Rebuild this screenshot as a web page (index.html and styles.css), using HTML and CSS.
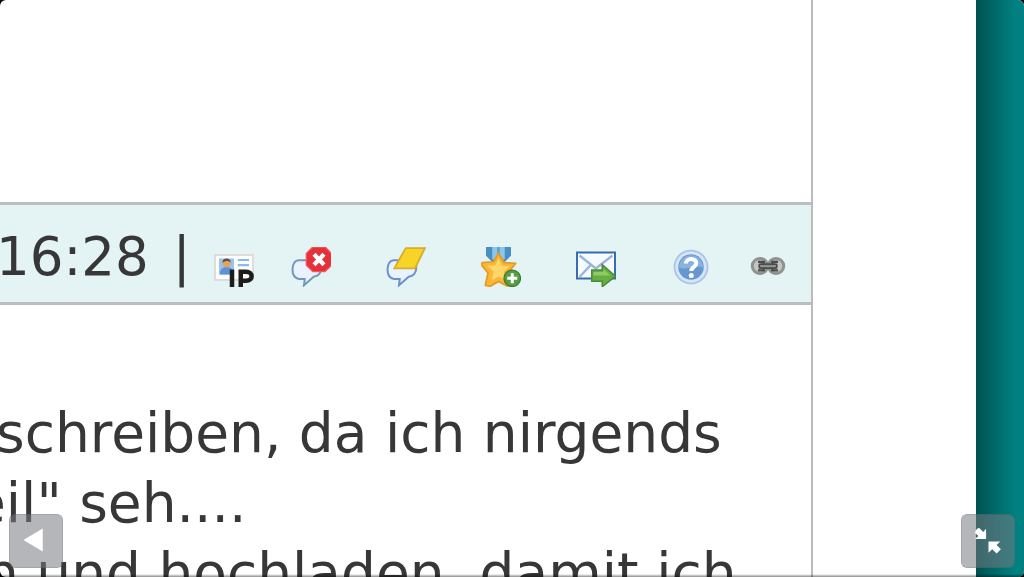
FILE: index.html
```html
<!DOCTYPE html>
<html lang="de">
<head>
  <meta charset="utf-8">
  <title>Forum</title>
  <link rel="stylesheet" href="styles.css">
</head>
<body>
  <div class="screen">
    <main class="page">
      <article class="post">
        <div class="post-end"></div>
        <header class="post-bar">
          <time class="post-time">16:28</time>
          <span class="divider">|</span>
          <a class="tool" href="#ip" aria-label="IP">
            <svg viewBox="0 0 16 16">
              <rect x=".4" y="3.200" width="15.200" height="10" fill="#fdfdfd" stroke="#ddd8d4" stroke-width=".7"/>
              <rect x="2" y="4.600" width="6" height="6.400" fill="#9cc3ee"/>
              <path d="M2.400 11c0-2.200 1-3 2.600-3s2.800.8 2.800 3z" fill="#5b93d8"/>
              <circle cx="5" cy="6.600" r="1.600" fill="#e0a55c"/>
              <path d="M3.300 6.300c0-2.300 3.400-2.300 3.500 0-1-.9-2-.9-3.500 0z" fill="#5c5048"/>
              <path d="M9.500 5.200h4.500M9.500 7.200h4.500" stroke="#8dbbe8" stroke-width=".9"/>
              <path d="M7.200 9v7M10.700 16V9.900h2.100c3 0 3 3.600 0 3.600h-2" fill="none" stroke="#1c1c1c" stroke-width="1.800"/>
            </svg>
          </a>
          <nav class="tools">
            <a class="tool" href="#delete" aria-label="Löschen">
              <svg viewBox="0 0 16 16">
                <path d="M3 5.300h6.500c2 0 2.600 1 2.600 2.700 0 2.600-1 3.400-3 3.900L5.200 15.300l.3-2.500H3.200C1.200 12.400.6 11 .6 9S1.200 5.600 3 5.300z" fill="#e9f3ff" stroke="#7398bb" stroke-width=".8"/>
                <path d="M8.700 0h5l2.500 2.600v4.800l-2.600 2.400H8.700L6.100 7.300V2.600z" fill="#e5303a" stroke="#f05b5b" stroke-width=".5"/>
                <path d="M9.200 2.900l4 4.200M13.200 2.900l-4 4.200" stroke="#fff" stroke-width="1.700"/>
              </svg>
            </a>
            <a class="tool" href="#edit" aria-label="Bearbeiten">
              <svg viewBox="0 0 16 16">
                <path d="M3 5.300h6.500c2 0 2.600 1 2.600 2.700 0 2.600-1 3.400-3 3.900L5.200 15.300l.3-2.500H3.200C1.200 12.400.6 11 .6 9S1.200 5.600 3 5.300z" fill="#e9f3ff" stroke="#6b92cb" stroke-width=".8"/>
                <path d="M7.900.4h7.700l-4 8.100H3.300z" fill="#f8d426" stroke="#d8ac2c" stroke-width=".7"/>
              </svg>
            </a>
            <a class="tool" href="#award" aria-label="Auszeichnen">
              <svg viewBox="0 0 16 16">
                <path d="M2 0h10v3.500L9.500 6h-5L2 3.500z" fill="#4a8fc4"/>
                <path d="M4.500 0h5v5h-5z" fill="#8fc5e6"/>
                <path d="M6.500 0h1v4h-1z" fill="#5b9fce"/>
                <path d="M7 2.500l2.200 3.700 4.700.3-3 3.700 1.500 5.300-2 .1L7 13.800l-3.300 1.900-2-.3 1.100-5L0 6.900l.6-.7 4.400-.3z" fill="#fbb537" stroke="#e59a25" stroke-width=".7" stroke-linejoin="round"/>
                <path d="M7 4.500l1.300 3 3.200.3-2.500 2 .7 3L7 11.900l-2.700 1.300.8-3.400-2.600-2.300 3.300-.2z" fill="#ffd768"/>
                <circle cx="12.500" cy="12.500" r="3.300" fill="#569e43" stroke="#397c30" stroke-width=".5"/>
                <path d="M12.500 10.500v4M10.500 12.500h4" stroke="#fff" stroke-width="1.200"/>
              </svg>
            </a>
            <a class="tool" href="#forward" aria-label="Weiterleiten">
              <svg viewBox="0 0 16 16">
                <rect x=".4" y="2.200" width="15.200" height="10.400" fill="#f5fbff" stroke="#376caf" stroke-width=".8"/>
                <path d="M1.400 3.400l6.500 5.200 6.700-5.200M1.400 12l4.700-5M14.600 12l-4.500-5" fill="none" stroke="#9ab3dd" stroke-width=".9"/>
                <path d="M6.300 9.200h4.200V7.100l5.300 4.600-5.300 4.200v-2.200H6.300z" fill="#66ae42" stroke="#4a8a35" stroke-width=".6"/>
                <path d="M7 10h4V8.800l2.700 2.600H7z" fill="#91c964"/>
              </svg>
            </a>
            <a class="tool" href="#help" aria-label="Hilfe">
              <svg viewBox="0 0 16 16">
                <circle cx="8" cy="8" r="6.600" fill="#d5e5fa" stroke="#a9c4e6" stroke-width=".7"/>
                <circle cx="8" cy="8" r="5.100" fill="#6797cf"/>
                <path d="M3.200 8.300c.2-6.700 9.400-6.700 9.600 0-3-1.500-6 1.200-9.600 0z" fill="#88b2df"/>
                <path d="M6 6.600c0-2.500 4.200-2.400 4.100 0 0 1.400-2 1.300-2 3" fill="none" stroke="#fff" stroke-width="1.600"/>
                <circle cx="8.100" cy="11.400" r="1" fill="#fff"/>
              </svg>
            </a>
          </nav>
          <a class="tool" href="#link" aria-label="Link">
            <svg viewBox="0 0 16 16">
              <rect x="1.700" y="4.600" width="6.200" height="6" rx="3" fill="#c4c6c3" stroke="#909290" stroke-width="1.200"/>
              <rect x="8.100" y="4.600" width="6.200" height="6" rx="3" fill="#c4c6c3" stroke="#909290" stroke-width="1.200"/>
              <path d="M4 5.900h2.300v3.400H4M12 5.900H9.700v3.400H12" fill="none" stroke="#4b4b4b" stroke-width=".9"/>
              <rect x="4.500" y="6.800" width="7" height="1.600" rx=".4" fill="#909290" stroke="#4b4b4b" stroke-width=".7"/>
            </svg>
          </a>
        </header>
        <div class="post-text">
          <p>schreiben, da ich nirgends</p>
          <p class="cut-word">eil" seh....</p>
          <p class="cut-letter">n und hochladen, damit ich</p>
        </div>
      </article>
    </main>
    <div class="backdrop"></div>
  </div>
  <button class="overlay-button back" aria-label="Zurück">
    <svg viewBox="0 0 54 54"><path d="M14 26l20-12v24z"/></svg>
  </button>
  <button class="overlay-button shrink" aria-label="Verkleinern">
    <svg viewBox="0 0 54 54">
      <path d="M25 25H13.500l3.500-3.300-4-3.400c1.500-.5.500-1.300 1.500-2.300.6-1.300 1.700-2.200 3.500-2.500l4 4.200 3-3.500z"/>
      <path d="M27.500 27.500h12.200l-3.700 3.700 4.400 4.300-4.400 4.600-4.600-4.600-3.900 3.700z"/>
    </svg>
  </button>
</body>
</html>
```
FILE: styles.css
```css
body {
  margin: 0;
  height: 100vh;
  overflow: hidden;
  background-color: #000;
  color: #373737;
  font-family: Verdana, "DejaVu Sans", sans-serif;
}
.screen {
  display: flex;
  height: 100vh;
  border-radius: 6px;
  overflow: hidden;
  background-color: #fff;
}
.page {
  flex: 1;
  min-width: 0;
  padding-right: 163px;
  overflow: hidden;
}
.post {
  border-right: 2px solid #bbb;
}
.post-end {
  height: 202px;
}
.post-bar {
  display: flex;
  align-items: flex-end;
  height: 82px;
  padding-bottom: 15px;
  border-top: 3px solid #b9bfbf;
  border-bottom: 3px solid #b9bfbf;
  background-color: #e4f3f3;
}
.post-time,
.divider {
  font-size: 53px;
  line-height: 60px;
}
.post-time {
  margin-left: -4px;
}
.divider {
  margin: 0 23px 0 24px;
}
.tools {
  display: flex;
  gap: 55px;
  margin: 0 37px;
}
.tool,
.tool svg {
  display: block;
  width: 40px;
  height: 40px;
}
.post-text {
  margin-left: -4px;
  padding-top: 93px;
}
.post-text p {
  margin: 0;
  font-size: 55px;
  line-height: 70px;
  white-space: nowrap;
}
.post-text .cut-word {
  text-indent: -24px;
}
.post-text .cut-letter {
  text-indent: -12px;
}
.backdrop {
  width: 48px;
  background: linear-gradient(to right, #005050, #006060 25%, #008080 80%);
}
.overlay-button {
  position: fixed;
  bottom: 9px;
  width: 54px;
  height: 54px;
  padding: 0;
  border: 1px solid rgba(100, 105, 115, 0.6);
  border-radius: 6px;
  background-color: rgba(118, 122, 130, 0.55);
  background-clip: padding-box;
  cursor: pointer;
}
.overlay-button svg {
  display: block;
  fill: #fff;
}
.back {
  left: 9px;
}
.shrink {
  right: 9px;
}
.screen::after {
  content: "";
  position: fixed;
  right: 0;
  bottom: 0;
  left: 0;
  height: 3px;
  background: linear-gradient(to bottom, transparent, rgba(0, 0, 0, 0.45));
}
```
